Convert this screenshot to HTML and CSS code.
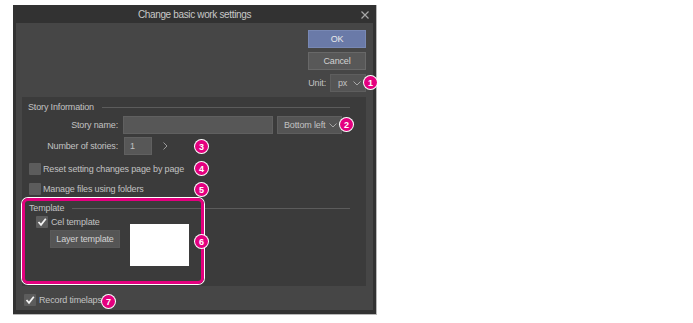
FILE: index.html
```html
<!DOCTYPE html>
<html lang="en">
<head>
  <meta charset="UTF-8" />
  <meta name="viewport" content="width=device-width, initial-scale=1.0"/>
  <title>Change basic work settings</title>
  <link rel="stylesheet" href="styles.css">
</head>
<body>
  <div class="page">
    <div class="dialog">
      <div class="titlebar">
        <span class="title">Change basic work settings</span>
        <svg class="close" width="8" height="8" viewBox="0 0 8 8"><path d="M0.5 0.5 L7.5 7.5 M7.5 0.5 L0.5 7.5" stroke="#a8a8a8" stroke-width="1.2"/></svg>
      </div>

      <div class="content">
        <div class="actions">
          <button class="btn btn-ok">OK</button>
          <button class="btn">Cancel</button>
          <div class="unit-row">
            <span>Unit:</span>
            <div class="select select-unit">
              <span>px</span>
              <svg width="8" height="5" viewBox="0 0 8 5"><path d="M0.5 0.5 L4 4 L7.5 0.5" fill="none" stroke="#a8a8a8" stroke-width="1"/></svg>
            </div>
          </div>
        </div>

        <div class="group">
          <div class="legend"><span>Story Information</span><i class="rule"></i></div>

          <div class="row row-name">
            <span class="field-label">Story name:</span>
            <div class="input input-name"></div>
            <div class="select select-pos">
              <span>Bottom left</span>
              <svg width="8" height="5" viewBox="0 0 8 5"><path d="M0.5 0.5 L4 4 L7.5 0.5" fill="none" stroke="#a8a8a8" stroke-width="1"/></svg>
            </div>
          </div>

          <div class="row row-num">
            <span class="field-label">Number of stories:</span>
            <div class="input input-num">1</div>
            <svg class="arrow" width="5" height="8" viewBox="0 0 5 8"><path d="M0.5 0.5 L4 4 L0.5 7.5" fill="none" stroke="#9a9a9a" stroke-width="1"/></svg>
          </div>

          <div class="check-row check-reset"><span class="checkbox"></span>Reset setting changes page by page</div>
          <div class="check-row check-folders"><span class="checkbox"></span>Manage files using folders</div>

          <div class="template">
            <div class="legend"><span>Template</span><i class="rule"></i></div>
            <div class="template-body">
              <div class="template-left">
                <div class="check-row check-cel">
                  <span class="checkbox"><svg width="10" height="10" viewBox="0 0 10 10"><path d="M1.5 5 L4 7.8 L8.8 1.8" fill="none" stroke="#f2f2f2" stroke-width="1.8"/></svg></span>
                  Cel template
                </div>
                <button class="btn btn-layer">Layer template</button>
              </div>
              <div class="preview"></div>
            </div>
          </div>
        </div>

        <div class="check-row timelapse">
          <span class="checkbox"><svg width="10" height="10" viewBox="0 0 10 10"><path d="M1.5 5 L4 7.8 L8.8 1.8" fill="none" stroke="#f2f2f2" stroke-width="1.8"/></svg></span>
          Record timelapse
        </div>
      </div>
    </div>

    <div class="highlight"></div>
    <span class="badge badge-1">1</span>
    <span class="badge badge-2">2</span>
    <span class="badge badge-3">3</span>
    <span class="badge badge-4">4</span>
    <span class="badge badge-5">5</span>
    <span class="badge badge-6">6</span>
    <span class="badge badge-7">7</span>
  </div>
</body>
</html>
```

FILE: styles.css
```css
body {
  margin: 0;
  background: #fff;
  font-family: "Liberation Sans", Arial, sans-serif;
  font-size: 9px;
  letter-spacing: -0.15px;
  color: #c2c2c2;
}

.page {
  position: relative;
  width: 693px;
  height: 323px;
  padding: 5px 0 0 13px;
  box-sizing: border-box;
}

.dialog {
  width: 364px;
  height: 310px;
  box-sizing: border-box;
  background: #323232;
  border-right: 1px solid #b8b8b8;
  border-bottom: 1px solid #b8b8b8;
  display: flex;
  flex-direction: column;
}

.titlebar {
  position: relative;
  height: 18px;
  display: flex;
  align-items: center;
  justify-content: center;
  font-size: 10px;
  letter-spacing: -0.35px;
  color: #c8c8c8;
}

.close {
  position: absolute;
  right: 7px;
  top: 6px;
}

.content {
  margin: 0 3px 4px 3px;
  flex: 1;
  background: #464646;
  display: flex;
  flex-direction: column;
}

/* OK / Cancel / Unit */
.actions {
  height: 74px;
  box-sizing: border-box;
  padding: 7px 7px 0 0;
  display: flex;
  flex-direction: column;
  align-items: flex-end;
  gap: 4px;
}

.btn {
  width: 58px;
  height: 18px;
  padding: 0;
  border: 1px solid #686868;
  background: #585858;
  color: #d2d2d2;
  font: inherit;
  letter-spacing: inherit;
  white-space: nowrap;
}

.btn-ok {
  background: #6a7aa8;
  border-color: #7888b4;
  color: #e8e8e8;
}

.unit-row {
  display: flex;
  align-items: center;
  gap: 4px;
}

.select {
  height: 18px;
  box-sizing: border-box;
  background: #545454;
  border: 1px solid #5e5e5e;
  display: flex;
  align-items: center;
  justify-content: space-between;
  padding: 0 4px 0 7px;
  white-space: nowrap;
}

.select-unit {
  width: 36px;
}

/* Story Information group */
.group {
  margin: 0 7px 0 6px;
  height: 189px;
  box-sizing: border-box;
  padding-top: 3px;
  background: #3b3b3b;
  display: flex;
  flex-direction: column;
}

.legend {
  height: 14px;
  display: flex;
  align-items: center;
  gap: 8px;
  padding-left: 6px;
}

.rule {
  flex: 1;
  height: 1px;
  margin-right: 16px;
  background: #5c5c5c;
}

.row {
  display: flex;
  align-items: center;
  height: 18px;
}

.row-name {
  margin-top: 2px;
}

.row-num {
  margin-top: 3px;
}

.field-label {
  width: 101px;
  box-sizing: border-box;
  padding-right: 5px;
  text-align: right;
  white-space: nowrap;
}

.input {
  height: 18px;
  box-sizing: border-box;
  background: #575757;
  border: 1px solid #606060;
}

.input-name {
  width: 150px;
}

.select-pos {
  width: 65px;
  margin-left: 4px;
  padding-left: 6px;
}

.input-num {
  width: 28px;
  margin-left: 1px;
  padding-left: 5px;
  display: flex;
  align-items: center;
}

.arrow {
  margin-left: 11px;
}

.check-row {
  display: flex;
  align-items: center;
  gap: 2px;
  height: 18px;
  padding-left: 7px;
  white-space: nowrap;
}

.checkbox {
  width: 12px;
  height: 12px;
  background: #5c5c5c;
  border-radius: 1px;
  display: flex;
  align-items: center;
  justify-content: center;
  flex-shrink: 0;
}

.check-reset {
  margin-top: 5px;
}

.check-folders {
  margin-top: 2px;
}

/* Template */
.template {
  margin-top: 3px;
}

.template .legend {
  padding-left: 7px;
}

.template-body {
  display: flex;
  padding-left: 14px;
}

.template-left {
  width: 84px;
}

.check-cel {
  height: 14px;
  padding-left: 0;
  gap: 3px;
}

.btn-layer {
  width: 70px;
  margin: 1px 0 0 14px;
  border-color: #595959;
  background: #555;
}

.preview {
  width: 59px;
  height: 42px;
  margin: 9px 0 0 10px;
  background: #fff;
}

.timelapse {
  height: 20px;
  margin-top: 4px;
  padding-left: 8px;
  gap: 3px;
}

/* annotations */
.highlight {
  position: absolute;
  left: 22px;
  top: 198px;
  width: 182px;
  height: 86px;
  box-sizing: border-box;
  border: 3px solid #e4007f;
  border-radius: 6px;
  box-shadow: 0 0 0 1px #fff;
}

.badge {
  position: absolute;
  width: 13px;
  height: 13px;
  border-radius: 50%;
  background: #e4007f;
  box-shadow: 0 0 0 1px #fff;
  color: #fff;
  font-family: "Liberation Sans", Arial, sans-serif;
  font-weight: bold;
  font-size: 9px;
  letter-spacing: 0;
  display: flex;
  align-items: center;
  justify-content: center;
}

.badge-1 { left: 364px; top: 76px; }
.badge-2 { left: 340px; top: 118px; }
.badge-3 { left: 195px; top: 140px; }
.badge-4 { left: 195px; top: 162px; }
.badge-5 { left: 195px; top: 183px; }
.badge-6 { left: 195px; top: 235px; }
.badge-7 { left: 102px; top: 295px; }
```
